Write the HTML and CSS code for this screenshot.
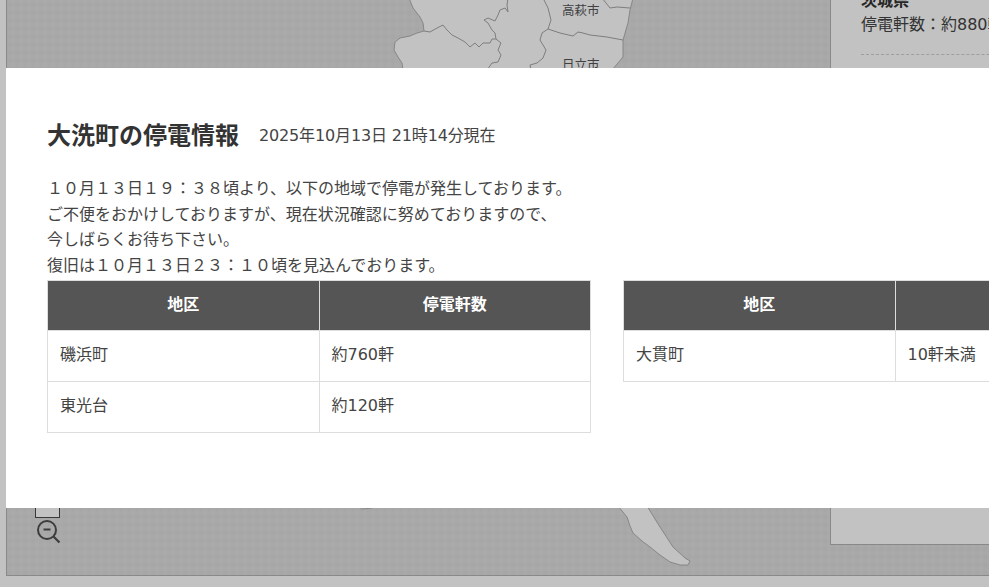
FILE: index.html
```html
<!DOCTYPE html>
<html lang="ja">
<head>
<meta charset="utf-8">
<title>大洗町の停電情報</title>
<link rel="stylesheet" href="styles.css">
</head>
<body>
<div class="page">
  <main class="map">
    <svg class="land" width="983" height="575" viewBox="0 0 983 575" aria-hidden="true">
      <g transform="translate(-7 0)">
        <path class="shape" d="M409 -2L413 8L420 17L423 23L424 31L417 33L410 36L400 38L395 42L394 50L398 57L402 63L403 70L612 70L618 63L623 57L623 40L628 23L630 10L633 -2Z"/>
        <path class="line" d="M424 31L430 32L437 28L443 25L447 30L452 35L458 38L465 42L470 47L475 43L479 47L483 43L490 43L492 39L496 39L495 33L492 30L488 23L484 20L488 18L495 21L498 15L500 10L505 8L508 12L507 5L508 -2M496 39L501 43L498 50L501 55L498 62L492 63L487 70M543 -2L548 8L551 20L548 29L542 33L540 40L546 50L543 58L537 63L530 65L531 70M548 29L560 33L573 36L578 32L583 33L590 35L607 37L623 40M602 -2L610 8L617 7L630 8"/>
        <path class="shape" d="M618 506L627 517L630 526L633 533L642 541L650 547L660 555L670 562L680 565L688 565L690 561L685 558L673 547L660 527L647 506Z"/>
        <path class="shape" d="M358 506L362 509L372 508L376 506Z"/>
      </g>
    </svg>
    <span class="city city-takahagi">高萩市</span>
    <span class="city city-hitachi">日立市</span>
    <div class="zoom">
      <div class="zoom-box"></div>
      <svg class="zoom-out" width="26" height="26" viewBox="0 0 26 26" aria-hidden="true">
        <circle cx="10" cy="10" r="9" fill="none" stroke="#505050" stroke-width="2"/>
        <path d="M16.5 16.5L22.5 22.5" fill="none" stroke="#505050" stroke-width="2.2"/>
        <path d="M6.5 9.5H13.5" fill="none" stroke="#505050" stroke-width="2"/>
      </svg>
    </div>
    <aside class="panel">
      <div class="panel-inner">
        <h2 class="panel-title">茨城県</h2>
        <p class="panel-count">停電軒数：約880軒</p>
        <div class="panel-rule"></div>
      </div>
    </aside>
  </main>
</div>
<div class="overlay"></div>
<section class="modal">
  <header class="modal-head">
    <h1 class="modal-title">大洗町の停電情報</h1>
    <span class="modal-date">2025年10月13日 21時14分現在</span>
  </header>
  <p class="notice">１０月１３日１９：３８頃より、以下の地域で停電が発生しております。<br>ご不便をおかけしておりますが、現在状況確認に努めておりますので、<br>今しばらくお待ち下さい。<br>復旧は１０月１３日２３：１０頃を見込んでおります。</p>
  <div class="tables">
    <table class="outage">
      <thead><tr><th>地区</th><th>停電軒数</th></tr></thead>
      <tbody>
        <tr><td>磯浜町</td><td>約760軒</td></tr>
        <tr><td>東光台</td><td>約120軒</td></tr>
      </tbody>
    </table>
    <table class="outage">
      <thead><tr><th>地区</th><th>停電軒数</th></tr></thead>
      <tbody>
        <tr><td>大貫町</td><td>10軒未満</td></tr>
      </tbody>
    </table>
  </div>
</section>
</body>
</html>
```
FILE: styles.css
```css
* { box-sizing: border-box; }
html, body {
  margin: 0;
  height: 100%;
  overflow: hidden;
  background: #fff;
  color: #444;
  font-family: "DejaVu Sans", "Noto Sans CJK JP", sans-serif;
  font-size: 16px;
}
.page {
  padding-left: 6px;
  height: 587px;
  overflow: hidden;
}
.map {
  position: relative;
  width: 1100px;
  height: 576px;
  border-left: 1px solid #b4b4b4;
  border-bottom: 1px solid #b4b4b4;
  overflow: hidden;
  background-color: #e0e0e0;
  background-image:
    repeating-linear-gradient(90deg, rgba(0,0,0,.01) 0 4px, transparent 4px 8px),
    repeating-linear-gradient(0deg, rgba(0,0,0,.01) 0 4px, transparent 4px 8px);
}
.land { position: absolute; left: 0; top: 0; filter: blur(.3px); }
.shape { fill: #fff; stroke: #b0b0b0; stroke-width: 1; }
.line { fill: none; stroke: #a6a6a6; stroke-width: 1; }
.city {
  position: absolute;
  font-size: 12.5px;
  line-height: 16px;
  color: #555;
  white-space: nowrap;
}
.city-takahagi { left: 555px; top: 3px; }
.city-hitachi { left: 555px; top: 57px; }
.zoom {
  position: absolute;
  left: 28px;
  top: 480px;
  display: flex;
  flex-direction: column;
  align-items: flex-start;
  gap: 2px;
}
.zoom-box {
  width: 25px;
  height: 38px;
  background: #fff;
  border: 1px solid #4a4a4a;
}
.zoom-out { margin-left: 2px; }
.panel {
  position: absolute;
  left: 823px;
  top: 0;
  width: 300px;
  height: 545px;
  background: #fff;
  border-left: 1px solid #b4b4b4;
  border-bottom: 1px solid #b4b4b4;
  overflow: hidden;
}
.panel-inner { margin-top: -11px; padding-left: 30px; }
.panel-title {
  margin: 0;
  font-size: 16px;
  line-height: 24px;
  font-weight: 700;
  color: #333;
}
.panel-count {
  margin: 0;
  font-size: 16px;
  line-height: 24px;
  white-space: nowrap;
}
.panel-rule {
  margin-top: 17px;
  border-top: 1px dashed #d0d0d0;
}
.overlay {
  position: fixed;
  inset: 0;
  background: rgba(0,0,0,.24);
}
.modal {
  position: fixed;
  left: 6px;
  top: 68px;
  width: 1200px;
  height: 440px;
  background: #fff;
  padding: 50px 41px 0;
}
.modal-head {
  display: flex;
  align-items: center;
  gap: 20px;
  height: 36px;
}
.modal-title {
  margin: 0;
  font-size: 24px;
  line-height: 36px;
  font-weight: 700;
  color: #333;
}
.modal-date { font-size: 16px; line-height: 36px; letter-spacing: -.15px; }
.notice {
  margin: 21px 0 0;
  line-height: 25.7px;
  font-size: 16px;
  height: 105px;
  font-family: "Noto Sans CJK JP", sans-serif;
}
.tables {
  display: flex;
  align-items: flex-start;
  gap: 32px;
}
.outage {
  width: 544px;
  flex: none;
  table-layout: fixed;
  border-collapse: collapse;
}
.outage th, .outage td {
  border: 1px solid #ddd;
  font-size: 16px;
  line-height: 26px;
}
.outage th {
  height: 50px;
  padding: 0 12px 1px;
  background: #555;
  color: #fff;
  font-weight: 700;
  text-align: center;
}
.outage td {
  height: 51px;
  padding: 0 12px 2px;
}
```
